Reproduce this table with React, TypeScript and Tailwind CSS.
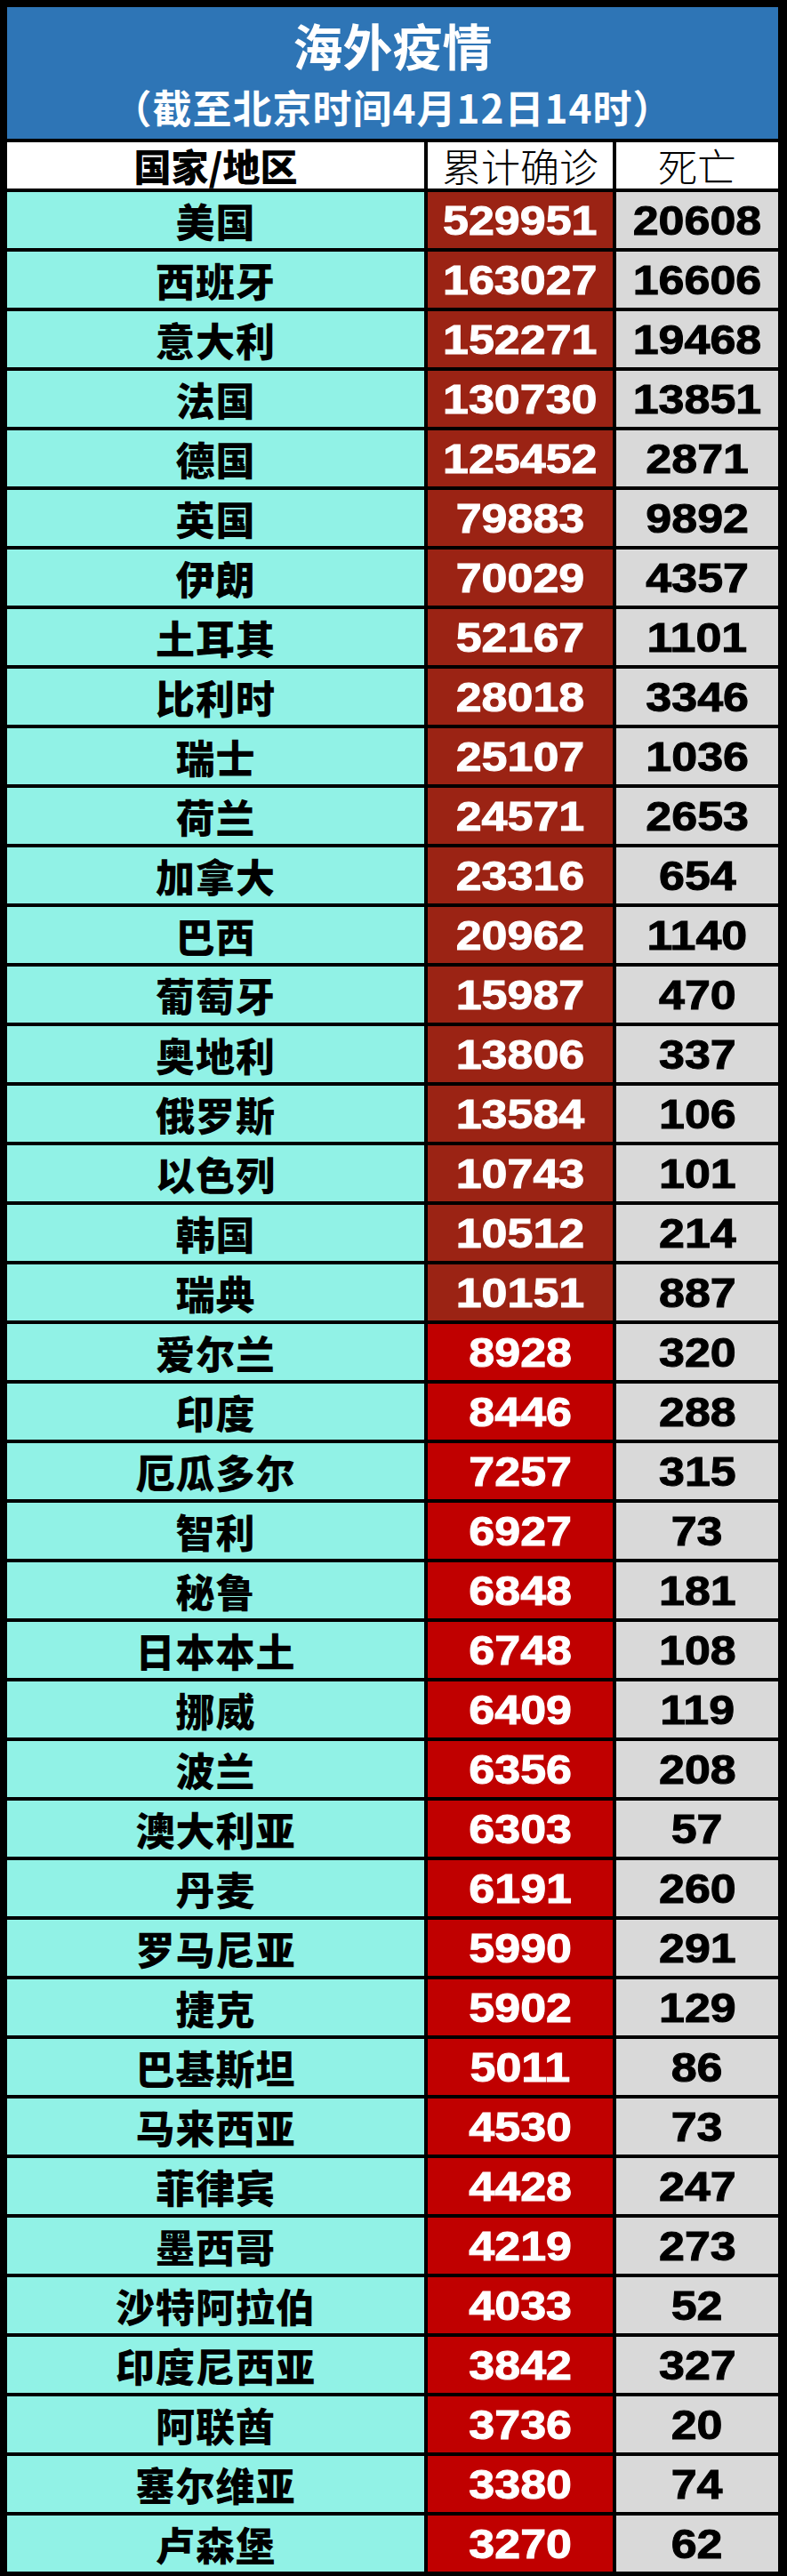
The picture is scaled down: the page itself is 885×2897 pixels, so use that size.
import React from "react";

type Row = { name: string; cases: number; deaths: number };

const rows: Row[] = [
  { name: "美国", cases: 529951, deaths: 20608 },
  { name: "西班牙", cases: 163027, deaths: 16606 },
  { name: "意大利", cases: 152271, deaths: 19468 },
  { name: "法国", cases: 130730, deaths: 13851 },
  { name: "德国", cases: 125452, deaths: 2871 },
  { name: "英国", cases: 79883, deaths: 9892 },
  { name: "伊朗", cases: 70029, deaths: 4357 },
  { name: "土耳其", cases: 52167, deaths: 1101 },
  { name: "比利时", cases: 28018, deaths: 3346 },
  { name: "瑞士", cases: 25107, deaths: 1036 },
  { name: "荷兰", cases: 24571, deaths: 2653 },
  { name: "加拿大", cases: 23316, deaths: 654 },
  { name: "巴西", cases: 20962, deaths: 1140 },
  { name: "葡萄牙", cases: 15987, deaths: 470 },
  { name: "奥地利", cases: 13806, deaths: 337 },
  { name: "俄罗斯", cases: 13584, deaths: 106 },
  { name: "以色列", cases: 10743, deaths: 101 },
  { name: "韩国", cases: 10512, deaths: 214 },
  { name: "瑞典", cases: 10151, deaths: 887 },
  { name: "爱尔兰", cases: 8928, deaths: 320 },
  { name: "印度", cases: 8446, deaths: 288 },
  { name: "厄瓜多尔", cases: 7257, deaths: 315 },
  { name: "智利", cases: 6927, deaths: 73 },
  { name: "秘鲁", cases: 6848, deaths: 181 },
  { name: "日本本土", cases: 6748, deaths: 108 },
  { name: "挪威", cases: 6409, deaths: 119 },
  { name: "波兰", cases: 6356, deaths: 208 },
  { name: "澳大利亚", cases: 6303, deaths: 57 },
  { name: "丹麦", cases: 6191, deaths: 260 },
  { name: "罗马尼亚", cases: 5990, deaths: 291 },
  { name: "捷克", cases: 5902, deaths: 129 },
  { name: "巴基斯坦", cases: 5011, deaths: 86 },
  { name: "马来西亚", cases: 4530, deaths: 73 },
  { name: "菲律宾", cases: 4428, deaths: 247 },
  { name: "墨西哥", cases: 4219, deaths: 273 },
  { name: "沙特阿拉伯", cases: 4033, deaths: 52 },
  { name: "印度尼西亚", cases: 3842, deaths: 327 },
  { name: "阿联酋", cases: 3736, deaths: 20 },
  { name: "塞尔维亚", cases: 3380, deaths: 74 },
  { name: "卢森堡", cases: 3270, deaths: 62 },
];

const cjk = "font-['Noto_Sans_CJK_SC',sans-serif]";
const num = "font-['Liberation_Sans',Arial,sans-serif]";

function Num({ value, white }: { value: number; white?: boolean }) {
  return (
    <span
      className={`${num} inline-block scale-x-[1.13] text-[46px] font-bold leading-none [-webkit-text-stroke-width:1px] ${
        white ? "text-white" : "text-black"
      }`}
    >
      {value}
    </span>
  );
}

export default function App() {
  return (
    <div className="w-[885px] bg-black pt-2 pl-2 pr-[10px] pb-[5px]">
      <div className="flex h-[148px] flex-col items-center bg-[#2e75b6] text-white">
        <div className={`${cjk} mt-[14px] text-[56px] font-bold leading-none`}>海外疫情</div>
        <div className={`${cjk} mt-[20px] text-[44px] font-bold leading-none tracking-[1px]`}>
          （截至北京时间4月12日14时）
        </div>
      </div>

      <div className="mt-1 grid grid-cols-[469px_208px_182px] gap-1">
        <div className="flex h-[52px] items-center justify-center bg-white">
          <span className={`${cjk} text-[42px] font-black leading-none text-black`}>国家/地区</span>
        </div>
        <div className="flex h-[52px] items-center justify-center bg-white">
          <span className={`${cjk} text-[44px] font-light leading-none text-black`}>累计确诊</span>
        </div>
        <div className="flex h-[52px] items-center justify-center bg-white">
          <span className={`${cjk} text-[44px] font-light leading-none text-black`}>死亡</span>
        </div>

        {rows.map((r) => (
          <React.Fragment key={r.name}>
            <div className="flex h-[63px] items-center justify-center bg-[#91f2e6]">
              <span className={`${cjk} text-[44px] font-black leading-none tracking-[1px] text-black`}>
                {r.name}
              </span>
            </div>
            <div
              className={`flex h-[63px] items-center justify-center ${
                r.cases >= 10000 ? "bg-[#9b2314]" : "bg-[#c00000]"
              }`}
            >
              <Num value={r.cases} white />
            </div>
            <div className="flex h-[63px] items-center justify-center bg-[#d9d9d9]">
              <Num value={r.deaths} />
            </div>
          </React.Fragment>
        ))}
      </div>
    </div>
  );
}
